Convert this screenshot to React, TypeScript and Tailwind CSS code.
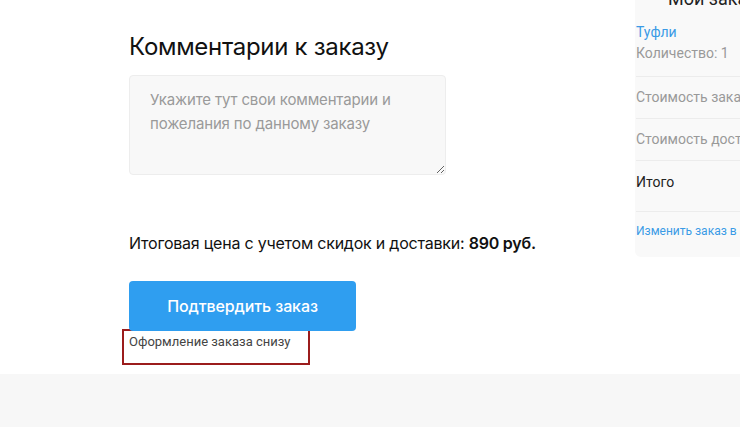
import React from "react";

export default function App() {
  return (
    <div className="w-[740px] h-[427px] overflow-hidden bg-white flex flex-col" style={{ fontFamily: "Inter, 'Noto Sans', sans-serif" }}>
      <div className="flex h-[374px] shrink-0">
        <div className="w-[635px] shrink-0 pl-[129px] pt-[31px]">
          <h2 className="text-[24px] leading-[32px] text-[#111] font-normal tracking-[-0.3px]">Комментарии к заказу</h2>
          <textarea
            className="mt-[12px] block w-[317px] h-[100px] bg-[#f8f8f8] border border-[#ededed] rounded-[4px] px-[20px] pt-[12px] text-[15px] leading-[24px] tracking-[-0.15px] placeholder:text-[#9a9a9a] outline-none"
            placeholder="Укажите тут свои комментарии и пожелания по данному заказу"
          />
          <p className="mt-[56px] text-[16px] leading-[24px] text-[#111] tracking-[-0.22px]">
            Итоговая цена с учетом скидок и доставки: <span className="font-semibold">890 руб.</span>
          </p>
          <button className="mt-[26px] w-[227px] h-[50px] rounded-[4px] bg-[#2f9ef0] text-white text-[16px] font-medium tracking-[-0.1px]">
            Подтвердить заказ
          </button>
          <div className="-ml-[7px] -mt-[2px] w-[188px] h-[36px] border-2 border-[#9b1c1c] pl-[5px] pt-[1px] text-[13px] leading-[20px] text-[#444]" style={{ fontFamily: "Roboto, sans-serif" }}>
            Оформление заказа снизу
          </div>
        </div>
        <div className="w-[300px] shrink-0 self-start h-[257px] bg-[#f9f9f9] rounded-bl-[6px] pl-[1px] overflow-hidden" style={{ fontFamily: "Roboto, sans-serif" }}>
          <div className="-mt-[13px] pl-[32px] text-[18px] leading-[24px] text-[#222]">Мои заказы</div>
          <div className="mt-[11px] text-[14px] leading-[21px] text-[#3a9be6]">Туфли</div>
          <div className="text-[14px] leading-[21px] text-[#999]">Количество: 1</div>
          <div className="mt-[12px] border-t border-[#ececec]" />
          <div className="h-[41px] flex items-center text-[14px] text-[#999] whitespace-nowrap">Стоимость заказа</div>
          <div className="border-t border-[#ececec]" />
          <div className="h-[41px] flex items-center text-[14px] text-[#999] whitespace-nowrap">Стоимость доставки</div>
          <div className="border-t border-[#ececec]" />
          <div className="h-[50px] flex items-center text-[14px] text-[#222] pb-[8px]">Итого</div>
          <div className="border-t border-[#ececec]" />
          <div className="mt-[11px] text-[12px] leading-[16px] text-[#3a9be6] whitespace-nowrap">Изменить заказ в корзине</div>
        </div>
      </div>
      <div className="flex-1 bg-[#f7f7f7]" />
    </div>
  );
}
